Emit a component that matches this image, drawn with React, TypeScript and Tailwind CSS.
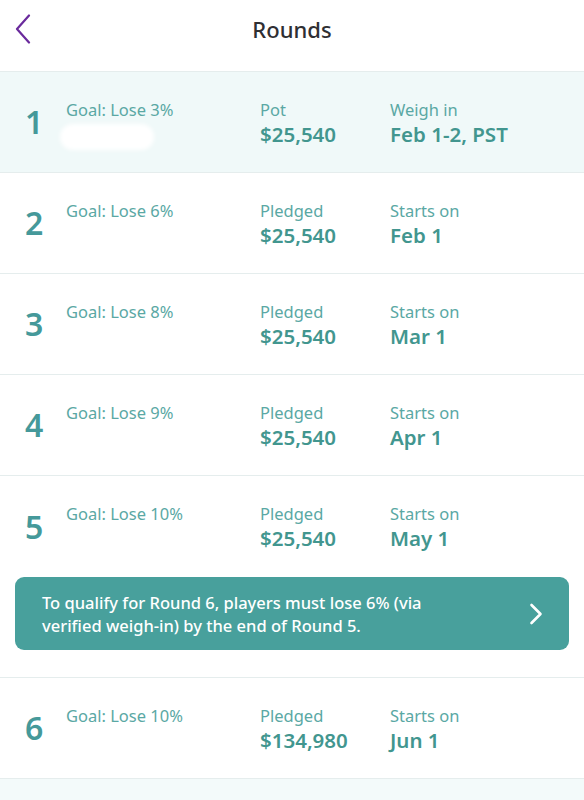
import React from 'react';

type Round = {
  n: number;
  goal: string;
  label: string;
  amount: string;
  dateLabel: string;
  date: string;
  active?: boolean;
  smudge?: boolean;
};

const rounds: Round[] = [
  { n: 1, goal: 'Goal: Lose 3%', label: 'Pot', amount: '$25,540', dateLabel: 'Weigh in', date: 'Feb 1-2, PST', active: true, smudge: true },
  { n: 2, goal: 'Goal: Lose 6%', label: 'Pledged', amount: '$25,540', dateLabel: 'Starts on', date: 'Feb 1' },
  { n: 3, goal: 'Goal: Lose 8%', label: 'Pledged', amount: '$25,540', dateLabel: 'Starts on', date: 'Mar 1' },
  { n: 4, goal: 'Goal: Lose 9%', label: 'Pledged', amount: '$25,540', dateLabel: 'Starts on', date: 'Apr 1' },
  { n: 5, goal: 'Goal: Lose 10%', label: 'Pledged', amount: '$25,540', dateLabel: 'Starts on', date: 'May 1' },
];

const RoundRow: React.FC<{ r: Round; border?: boolean }> = ({ r, border = true }) => (
  <div
    className={`flex items-center h-[101px] pl-[25px] ${r.active ? 'bg-[#f0f9f9]' : 'bg-white'} ${border ? 'border-b border-[#e5eded]' : ''}`}
  >
    <div className="w-[41px] text-[32px] font-semibold text-[#45999a] leading-none">{r.n}</div>
    <div className="w-[194px] self-start pt-[26px]">
      <div className="text-[16.5px] leading-[23px] text-[#5aa8a4]">{r.goal}</div>
      {r.smudge && <div className="mt-[3px] -ml-[6px] h-[26px] w-[94px] rounded-full bg-white blur-[2px]" />}
    </div>
    <div className="w-[130px] self-start pt-[26px]">
      <div className="text-[16.5px] leading-[23px] text-[#5aa8a4]">{r.label}</div>
      <div className="text-[20.5px] leading-[27px] font-semibold text-[#42968f]">{r.amount}</div>
    </div>
    <div className="self-start pt-[26px]">
      <div className="text-[16.5px] leading-[23px] text-[#5aa8a4]">{r.dateLabel}</div>
      <div className="text-[20.5px] leading-[27px] font-semibold text-[#42968f]">{r.date}</div>
    </div>
  </div>
);

const App: React.FC = () => {
  return (
    <div className="w-[584px] h-[800px] overflow-hidden bg-white" style={{ fontFamily: '"Noto Sans", Lato, sans-serif' }}>
      <div className="relative flex items-center justify-center h-[72px] border-b border-[#e5eded]">
        <svg className="absolute left-[14px] top-[14px]" width="18" height="30" viewBox="0 0 18 30" fill="none">
          <path d="M15 1.5 L3 15 L15 28.5" stroke="#6a2a9c" strokeWidth="2.2" strokeLinecap="round" strokeLinejoin="round" />
        </svg>
        <h1 className="text-[22px] font-medium text-[#2f2f33] -mt-[12px]">Rounds</h1>
      </div>

      {rounds.map((r, i) => (
        <RoundRow key={r.n} r={r} border={i < rounds.length - 1} />
      ))}

      <div className="px-[15px] pb-[27px] border-b border-[#e5eded]">
        <div className="flex items-center justify-between h-[73px] rounded-[9px] bg-[#48a09c] pl-[27px] pr-[26px]">
          <p className="text-[16.5px] leading-[23px] font-medium text-white">
            To qualify for Round 6, players must lose 6% (via
            <br />
            verified weigh-in) by the end of Round 5.
          </p>
          <svg width="14" height="22" viewBox="0 0 14 22" fill="none">
            <path d="M2.5 2 L11.5 11 L2.5 20" stroke="white" strokeWidth="2.6" strokeLinecap="round" strokeLinejoin="round" />
          </svg>
        </div>
      </div>

      <RoundRow r={{ n: 6, goal: 'Goal: Lose 10%', label: 'Pledged', amount: '$134,980', dateLabel: 'Starts on', date: 'Jun 1' }} />

      <div className="h-[40px] bg-[#f3fafa]" />
    </div>
  );
};

export default App;
